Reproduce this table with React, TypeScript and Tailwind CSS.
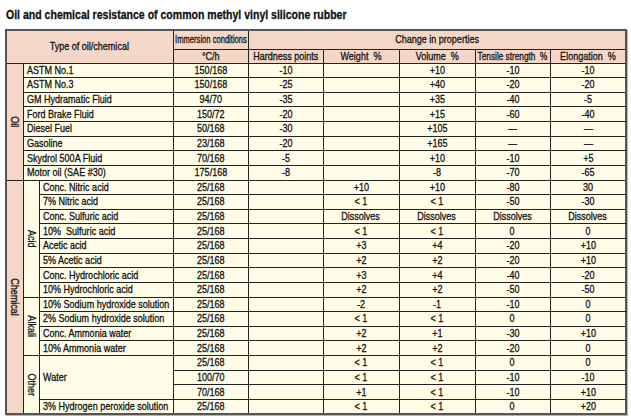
import React from 'react';

type Vals = [string, string, string, string, string, string];

const oilRows: [string, ...Vals][] = [
  ['ASTM No.1', '150/168', '-10', '', '+10', '-10', '-10'],
  ['ASTM No.3', '150/168', '-25', '', '+40', '-20', '-20'],
  ['GM Hydramatic Fluid', '94/70', '-35', '', '+35', '-40', '-5'],
  ['Ford Brake Fluid', '150/72', '-20', '', '+15', '-60', '-40'],
  ['Diesel Fuel', '50/168', '-30', '', '+105', '—', '—'],
  ['Gasoline', '23/168', '-20', '', '+165', '—', '—'],
  ['Skydrol 500A Fluid', '70/168', '-5', '', '+10', '-10', '+5'],
  ['Motor oil (SAE #30)', '175/168', '-8', '', '-8', '-70', '-65'],
];

interface ChemRow {
  sub?: [string, number];
  name?: [string, number];
  vals: Vals;
}

const chemRows: ChemRow[] = [
  { sub: ['Acid', 8], name: ['Conc. Nitric acid', 1], vals: ['25/168', '', '+10', '+10', '-80', '30'] },
  { name: ['7% Nitric acid', 1], vals: ['25/168', '', '< 1', '< 1', '-50', '-30'] },
  { name: ['Conc. Sulfuric acid', 1], vals: ['25/168', '', 'Dissolves', 'Dissolves', 'Dissolves', 'Dissolves'] },
  { name: ['10%  Sulfuric acid', 1], vals: ['25/168', '', '< 1', '< 1', '0', '0'] },
  { name: ['Acetic acid', 1], vals: ['25/168', '', '+3', '+4', '-20', '+10'] },
  { name: ['5% Acetic acid', 1], vals: ['25/168', '', '+2', '+2', '-20', '+10'] },
  { name: ['Conc. Hydrochloric acid', 1], vals: ['25/168', '', '+3', '+4', '-40', '-20'] },
  { name: ['10% Hydrochloric acid', 1], vals: ['25/168', '', '+2', '+2', '-50', '-50'] },
  { sub: ['Alkali', 4], name: ['10% Sodium hydroxide solution', 1], vals: ['25/168', '', '-2', '-1', '-10', '0'] },
  { name: ['2% Sodium hydroxide solution', 1], vals: ['25/168', '', '< 1', '< 1', '0', '0'] },
  { name: ['Conc. Ammonia water', 1], vals: ['25/168', '', '+2', '+1', '-30', '+10'] },
  { name: ['10% Ammonia water', 1], vals: ['25/168', '', '+2', '+2', '-20', '0'] },
  { sub: ['Other', 4], name: ['Water', 3], vals: ['25/168', '', '< 1', '< 1', '0', '0'] },
  { vals: ['100/70', '', '< 1', '< 1', '-10', '-10'] },
  { vals: ['70/168', '', '+1', '< 1', '-10', '+10'] },
  { name: ['3% Hydrogen peroxide solution', 1], vals: ['25/168', '', '< 1', '< 1', '0', '+20'] },
];

const td = 'border border-[#222] p-0 text-center align-middle leading-none font-normal';
const peach = 'bg-[#f4d7c7]';

// the source uses a condensed face; Liberation Sans squeezed sideways stands in for it
const T = ({ children, left, squeeze = 'scale-x-[0.82]' }: { children: React.ReactNode; left?: boolean; squeeze?: string }) => (
  <div className={`flex ${left ? 'justify-start pl-[3px]' : 'justify-center'}`}>
    <span className={`whitespace-pre ${squeeze} ${left ? 'origin-left' : ''}`}>{children}</span>
  </div>
);

const Vertical = ({ children }: { children: React.ReactNode }) => (
  <div className="flex justify-center">
    <span className="whitespace-pre scale-y-[0.82] [writing-mode:vertical-rl]">{children}</span>
  </div>
);

const ValueCells = ({ vals }: { vals: Vals }) => (
  <>
    {vals.map((v, i) => (
      <td key={i} className={td}>
        <T>{v}</T>
      </td>
    ))}
  </>
);

export default function App() {
  return (
    <div className="w-[631px] h-[419px] bg-white text-[#111] font-['Liberation_Sans',Arial,sans-serif] overflow-hidden">
      <div className="pt-[7px] pl-[6px] text-[13px] leading-[15px] font-bold [-webkit-text-stroke:0.3px_#111]">
        <span className="inline-block whitespace-nowrap origin-left scale-x-[0.81]">
          Oil and chemical resistance of common methyl vinyl silicone rubber
        </span>
      </div>
      <table className="mt-[7px] ml-[5px] w-[622px] table-fixed border-collapse border-2 border-[#555] bg-[#fffde8] text-[11px] [-webkit-text-stroke:0.3px_#111] shadow-[1px_1px_0_#b5b5b5]">
        <colgroup>
          <col className="w-[17px]" />
          <col className="w-[16px]" />
          <col className="w-[134px]" />
          <col className="w-[75px]" />
          <col className="w-[75px]" />
          <col className="w-[76px]" />
          <col className="w-[76px]" />
          <col className="w-[75px]" />
          <col className="w-[76px]" />
        </colgroup>
        <thead>
          <tr className={`h-[19px] ${peach}`}>
            <th colSpan={3} rowSpan={2} className={td}>
              <T>Type of oil/chemical</T>
            </th>
            <th className={td}>
              <T squeeze="scale-x-[0.69]">Immersion conditions</T>
            </th>
            <th colSpan={6} className={td}>
              <T>Change in properties</T>
            </th>
          </tr>
          <tr className={`h-[14px] ${peach}`}>
            <th className={td}><T>°C/h</T></th>
            <th className={td}><T>Hardness points</T></th>
            <th className={td}><T>Weight  %</T></th>
            <th className={td}><T>Volume  %</T></th>
            <th className={td}><T squeeze="scale-x-[0.75]">Tensile strength  %</T></th>
            <th className={td}><T>Elongation  %</T></th>
          </tr>
        </thead>
        <tbody>
          {oilRows.map(([n, ...vals], i) => (
            <tr key={n} className="h-[14.625px]">
              {i === 0 && (
                <td rowSpan={8} className={`${td} ${peach}`}>
                  <Vertical>Oil</Vertical>
                </td>
              )}
              <td colSpan={2} className={td}>
                <T left>{n}</T>
              </td>
              <ValueCells vals={vals as Vals} />
            </tr>
          ))}
          {chemRows.map((r, i) => (
            <tr key={i} className="h-[14.625px]">
              {i === 0 && (
                <td rowSpan={16} className={`${td} ${peach}`}>
                  <Vertical>Chemical</Vertical>
                </td>
              )}
              {r.sub && (
                <td rowSpan={r.sub[1]} className={td}>
                  <Vertical>{r.sub[0]}</Vertical>
                </td>
              )}
              {r.name && (
                <td rowSpan={r.name[1]} className={td}>
                  <T left>{r.name[0]}</T>
                </td>
              )}
              <ValueCells vals={r.vals} />
            </tr>
          ))}
        </tbody>
      </table>
    </div>
  );
}
